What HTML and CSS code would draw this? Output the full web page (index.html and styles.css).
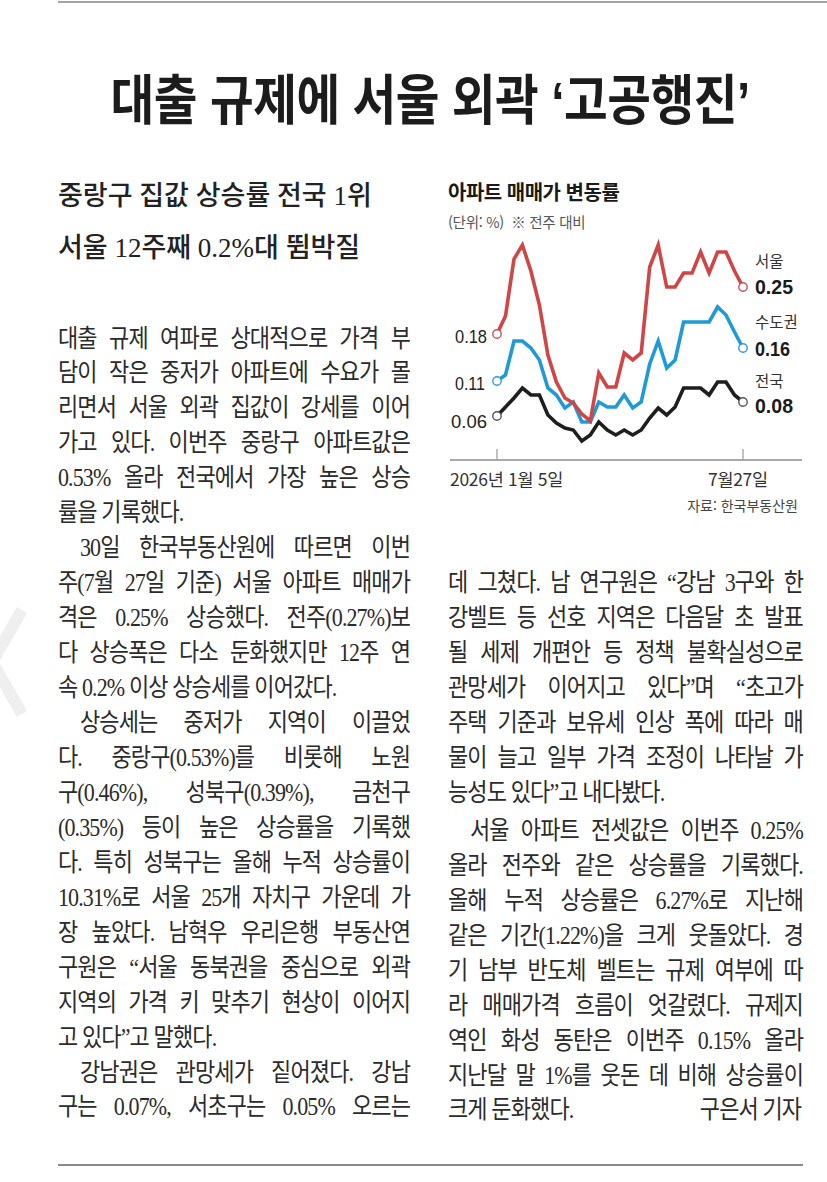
FILE: index.html
```html
<!DOCTYPE html>
<html lang="ko">
<head>
<meta charset="utf-8">
<title>대출 규제에 서울 외곽 ‘고공행진’</title>
<link rel="stylesheet" href="styles.css">
</head>
<body>
<svg class="edge-mark" width="26" height="120" viewBox="0 0 26 120" aria-hidden="true">
  <polyline points="22,8 -8,60 22,112" fill="none" stroke="#efefef" stroke-width="12"/>
</svg>
<div class="page">
  <div class="top-rule"></div>
  <h1 class="headline"><span class="headline-text">대출 규제에 서울 외곽 ‘고공행진’</span></h1>
  <div class="columns">
    <div class="col">
      <h2 class="subhead">
        <span class="sub-line">중랑구 집값 상승률 전국 1위</span>
        <span class="sub-line">서울 12주째 0.2%대 뜀박질</span>
      </h2>
      <div class="body-text body-left">
        <p class="para">
          <span class="ln">대출 규제 여파로 상대적으로 가격 부</span>
          <span class="ln">담이 작은 중저가 아파트에 수요가 몰</span>
          <span class="ln">리면서 서울 외곽 집값이 강세를 이어</span>
          <span class="ln">가고 있다. 이번주 중랑구 아파트값은</span>
          <span class="ln">0.53% 올라 전국에서 가장 높은 상승</span>
          <span class="ln end">률을 기록했다.</span>
        </p>
        <p class="para">
          <span class="ln ind">30일 한국부동산원에 따르면 이번</span>
          <span class="ln">주(7월 27일 기준) 서울 아파트 매매가</span>
          <span class="ln">격은 0.25% 상승했다. 전주(0.27%)보</span>
          <span class="ln">다 상승폭은 다소 둔화했지만 12주 연</span>
          <span class="ln end">속 0.2% 이상 상승세를 이어갔다.</span>
        </p>
        <p class="para">
          <span class="ln ind">상승세는 중저가 지역이 이끌었</span>
          <span class="ln">다. 중랑구(0.53%)를 비롯해 노원</span>
          <span class="ln">구(0.46%), 성북구(0.39%), 금천구</span>
          <span class="ln">(0.35%) 등이 높은 상승률을 기록했</span>
          <span class="ln">다. 특히 성북구는 올해 누적 상승률이</span>
          <span class="ln">10.31%로 서울 25개 자치구 가운데 가</span>
          <span class="ln">장 높았다. 남혁우 우리은행 부동산연</span>
          <span class="ln">구원은 “서울 동북권을 중심으로 외곽</span>
          <span class="ln">지역의 가격 키 맞추기 현상이 이어지</span>
          <span class="ln end">고 있다”고 말했다.</span>
        </p>
        <p class="para">
          <span class="ln ind">강남권은 관망세가 짙어졌다. 강남</span>
          <span class="ln">구는 0.07%, 서초구는 0.05% 오르는</span>
        </p>
      </div>
    </div>
    <div class="col">
      <figure class="chart">
        <figcaption class="chart-title">아파트 매매가 변동률</figcaption>
        <div class="chart-unit">(단위: %)&nbsp; ※ 전주 대비</div>
        <svg class="chart-svg" width="355" height="285" viewBox="0 0 355 285">
          <line class="axis" x1="2" y1="225" x2="354" y2="225"/>
          <line class="tick" x1="49" y1="214" x2="49" y2="225"/>
          <line class="tick" x1="295" y1="214" x2="295" y2="225"/>
          <polyline class="series s-nation" points="49,181 57.5,172 66,163 74.4,153 82.9,160 91.4,160 99.9,180 108.4,188 116.9,193 125.3,195 133.8,206 142.3,200 150.8,187 159.3,195 167.8,200 176.2,195 184.7,200 193.2,195 201.7,183 210.2,173 218.7,180 227.1,172 235.6,153 244.1,153 252.6,153 261.1,160 269.6,147 278,147 286.5,160 295,167"/>
          <polyline class="series s-metro" points="49,146 57.5,140 66,106 74.4,106 82.9,113 91.4,125 99.9,153 108.4,160 116.9,173 125.3,167 133.8,187 142.3,187 150.8,167 159.3,172 167.8,172 176.2,160 184.7,173 193.2,167 201.7,129 210.2,106 218.7,133 227.1,125 235.6,87 244.1,87 252.6,87 261.1,87 269.6,72 278,80 286.5,97 295,113"/>
          <polyline class="series s-seoul" points="49,99 57.5,81 66,24 74.4,10 82.9,36 91.4,70 99.9,120 108.4,147 116.9,163 125.3,168 133.8,179 142.3,186 150.8,138 159.3,152 167.8,152 176.2,118 184.7,125 193.2,118 201.7,32 210.2,10 218.7,52 227.1,52 235.6,38 244.1,38 252.6,17 261.1,38 269.6,17 278,17 286.5,36 295,52"/>
          <circle class="dot d-seoul" cx="49" cy="99" r="4.2"/>
          <circle class="dot d-seoul" cx="295" cy="52" r="4.2"/>
          <circle class="dot d-metro" cx="49" cy="146" r="4.2"/>
          <circle class="dot d-metro" cx="295" cy="113" r="4.2"/>
          <circle class="dot d-nation" cx="49" cy="181" r="4.2"/>
          <circle class="dot d-nation" cx="295" cy="167" r="4.2"/>
          <text class="val-left" x="39" y="108" text-anchor="end" textLength="32" lengthAdjust="spacingAndGlyphs">0.18</text>
          <text class="val-left" x="37" y="155" text-anchor="end" textLength="30" lengthAdjust="spacingAndGlyphs">0.11</text>
          <text class="val-left" x="39" y="193" text-anchor="end" textLength="36" lengthAdjust="spacingAndGlyphs">0.06</text>
          <text class="series-name" x="307" y="32">서울</text>
          <text class="val-right" x="307" y="59" textLength="38" lengthAdjust="spacingAndGlyphs">0.25</text>
          <text class="series-name" x="307" y="93">수도권</text>
          <text class="val-right" x="307" y="121" textLength="35" lengthAdjust="spacingAndGlyphs">0.16</text>
          <text class="series-name" x="307" y="152">전국</text>
          <text class="val-right" x="307" y="178" textLength="38" lengthAdjust="spacingAndGlyphs">0.08</text>
          <text class="axis-label" x="2" y="250.6">2026년 1월 5일</text>
          <text class="axis-label" x="260" y="250.6">7월27일</text>
          <text class="source" x="350" y="275.5" text-anchor="end">자료: 한국부동산원</text>
        </svg>
      </figure>
      <div class="body-text body-right">
        <p class="para">
          <span class="ln">데 그쳤다. 남 연구원은 “강남 3구와 한</span>
          <span class="ln">강벨트 등 선호 지역은 다음달 초 발표</span>
          <span class="ln">될 세제 개편안 등 정책 불확실성으로</span>
          <span class="ln">관망세가 이어지고 있다”며 “초고가</span>
          <span class="ln">주택 기준과 보유세 인상 폭에 따라 매</span>
          <span class="ln">물이 늘고 일부 가격 조정이 나타날 가</span>
          <span class="ln end">능성도 있다”고 내다봤다.</span>
        </p>
        <p class="para para-gap">
          <span class="ln ind">서울 아파트 전셋값은 이번주 0.25%</span>
          <span class="ln">올라 전주와 같은 상승률을 기록했다.</span>
          <span class="ln">올해 누적 상승률은 6.27%로 지난해</span>
          <span class="ln">같은 기간(1.22%)을 크게 웃돌았다. 경</span>
          <span class="ln">기 남부 반도체 벨트는 규제 여부에 따</span>
          <span class="ln">라 매매가격 흐름이 엇갈렸다. 규제지</span>
          <span class="ln">역인 화성 동탄은 이번주 0.15% 올라</span>
          <span class="ln">지난달 말 1%를 웃돈 데 비해 상승률이</span>
          <span class="ln end byline-row"><span>크게 둔화했다.</span><span class="byline">구은서 기자</span></span>
        </p>
      </div>
    </div>
  </div>
  <div class="bottom-rule"></div>
</div>
</body>
</html>
```

FILE: styles.css
```css
html, body {
  margin: 0;
  padding: 0;
  background: #ffffff;
}

body {
  font-family: "Noto Sans CJK KR", sans-serif;
  color: #2a2a2a;
  position: relative;
  width: 827px;
  height: 1182px;
  overflow: hidden;
}

.edge-mark {
  position: absolute;
  left: 0;
  top: 602px;
}

.page {
  padding: 0 24px 0 58px;
}

.top-rule {
  margin-top: 1px;
  margin-right: -24px;
  height: 2px;
  background: #a3a3a3;
}

.headline {
  margin: 0;
  padding-top: 68px;
  text-align: center;
  font-family: "Liberation Sans", "Noto Sans CJK KR", sans-serif;
  font-size: 54px;
  line-height: 60px;
  font-weight: 700;
  color: #1c1c1c;
  white-space: nowrap;
}

.headline-text {
  display: inline-block;
  transform: scaleX(0.88);
  letter-spacing: -0.5px;
}

.columns {
  display: grid;
  grid-template-columns: 352px 355px;
  column-gap: 38px;
  margin-top: 29px;
}

.col {
  min-width: 0;
}

.subhead {
  margin: 10px 0 0 0;
  font-family: "Liberation Serif", "Noto Sans CJK KR", serif;
  font-size: 27px;
  line-height: 52px;
  font-weight: 500;
  color: #222222;
}

.sub-line {
  display: block;
  white-space: nowrap;
}

.body-text {
  font-family: "Liberation Serif", "Noto Sans CJK KR", serif;
  font-size: 25px;
  line-height: 34.95px;
  letter-spacing: -1px;
  color: #2b2b2b;
}

.body-left {
  margin-top: 47.5px;
}

.body-right {
  margin-top: 46.2px;
}

.para {
  margin: 0;
}

.para-gap {
  margin-top: 3px;
}

/* newspaper-style condensed lines (장평 88%) */
.ln {
  display: block;
  box-sizing: border-box;
  width: calc(100% / 0.88);
  transform: scaleX(0.88);
  transform-origin: 0 0;
  text-align: justify;
  text-align-last: justify;
}

.ln.ind {
  padding-left: 25px;
}

.ln.end {
  text-align-last: left;
}

.byline-row {
  display: flex;
  justify-content: space-between;
}

.byline {
  padding-right: 2px;
}

.chart {
  margin: 0;
}

.chart-title {
  margin-top: 18px;
  font-size: 20px;
  line-height: 28px;
  font-weight: 700;
  letter-spacing: -0.5px;
  color: #1a1a1a;
}

.chart-unit {
  margin-top: 6px;
  font-size: 14.5px;
  line-height: 20px;
  color: #555555;
  letter-spacing: -0.3px;
}

.chart-svg {
  display: block;
  margin-top: 3px;
  overflow: visible;
}

.axis {
  stroke: #8c8c8c;
  stroke-width: 1.3;
}

.tick {
  stroke: #9a9a9a;
  stroke-width: 1.2;
}

.series {
  fill: none;
  stroke-width: 3.6;
  stroke-linejoin: miter;
  stroke-miterlimit: 6;
}

.s-seoul { stroke: #d04545; }
.s-metro { stroke: #1f9ad6; }
.s-nation { stroke: #1e1e1e; }

.dot {
  fill: #ffffff;
  stroke-width: 1.4;
}

.d-seoul { stroke: #c25656; }
.d-metro { stroke: #2a9fd6; }
.d-nation { stroke: #555555; }

.val-left {
  font-family: "Liberation Sans", sans-serif;
  font-size: 19px;
  fill: #222222;
}

.val-right {
  font-family: "Liberation Sans", sans-serif;
  font-size: 21px;
  font-weight: 700;
  fill: #1a1a1a;
}

.series-name {
  font-family: "Noto Sans CJK KR", sans-serif;
  font-size: 15.5px;
  fill: #333333;
}

.axis-label {
  font-family: "Noto Sans CJK KR", sans-serif;
  font-size: 17.5px;
  fill: #333333;
  letter-spacing: -0.3px;
}

.source {
  font-family: "Noto Sans CJK KR", sans-serif;
  font-size: 14px;
  fill: #444444;
}

.bottom-rule {
  margin-top: 36px;
  height: 1.5px;
  background: #8a8a8a;
}
```
